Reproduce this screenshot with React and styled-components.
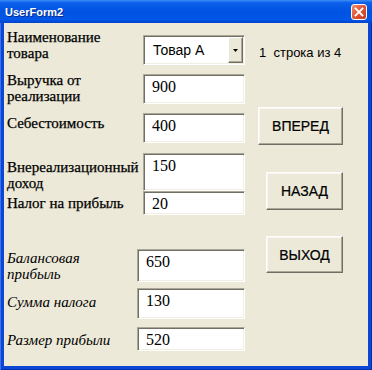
import React from 'react';
import styled, { createGlobalStyle, css } from 'styled-components';

const GlobalStyle = createGlobalStyle`
	html, body {
		margin: 0;
		padding: 0;
		background: #ffffff;
	}
	body {
		width: 372px;
		height: 370px;
		overflow: hidden;
	}
`;

const serif = `'Liberation Serif', 'Times New Roman', serif`;

const Window = styled.div`
	width: 372px;
	height: 370px;
	display: flex;
	flex-direction: column;
	box-sizing: border-box;
	background: #0a45d8;
`;

const TitleBar = styled.div`
	height: 23px;
	flex: 0 0 auto;
	display: flex;
	align-items: center;
	justify-content: space-between;
	padding: 0 5px 0 5px;
	background: linear-gradient(to bottom, #3d8ef7 0%, #0b5fea 12%, #0053e1 50%, #0257e9 85%, #0042c9 100%);
`;

const Title = styled.span`
	font-family: 'Liberation Sans', Arial, sans-serif;
	font-weight: bold;
	font-size: 11px;
	color: #ffffff;
	text-shadow: 1px 1px 0 #0a2a8a;
	padding-top: 1px;
`;

const CloseButton = styled.div`
	width: 16px;
	height: 16px;
	box-sizing: border-box;
	border: 1px solid #ffffff;
	border-radius: 3px;
	background: linear-gradient(135deg, #f0906f 0%, #e0583a 45%, #c73c1e 100%);
	display: flex;
	align-items: center;
	justify-content: center;
`;

const Frame = styled.div`
	flex: 1 1 auto;
	display: flex;
	padding: 0 4px 4px 4px;
	background: #0b46d6;
	box-shadow: inset 1px 0 0 #3a74e6, inset -1px 0 0 #0030b0, inset 0 -1px 0 #0030b0;
`;

const Body = styled.div`
	flex: 1 1 auto;
	display: flex;
	background: #ece9d8;
`;

const LeftColumn = styled.div`
	width: 241px;
	box-sizing: border-box;
	padding-left: 3px;
	display: flex;
	flex-direction: column;
`;

const RightColumn = styled.div`
	flex: 1 1 auto;
	display: flex;
	flex-direction: column;
	align-items: flex-end;
	padding-right: 25px;
`;

const Row = styled.div`
	display: grid;
	grid-template-columns: ${(p) => p.$label}px ${(p) => p.$field}px;
	height: ${(p) => p.$h}px;
	margin-top: ${(p) => p.$mt}px;
`;

const Label = styled.div`
	font-family: ${serif};
	font-size: 15px;
	line-height: 16px;
	color: #000000;
	-webkit-text-stroke: 0.25px #000000;
	white-space: pre;
	margin-top: ${(p) => p.$dy}px;
	align-self: start;
	${(p) =>
		p.$italic &&
		css`
			font-style: italic;
			-webkit-text-stroke: 0;
		`};
`;

const sunken = css`
	box-sizing: border-box;
	background: #ffffff;
	border-style: solid;
	border-width: 1px;
	border-color: #aca899 #ffffff #ffffff #aca899;
	box-shadow: inset 1px 1px 0 #716f64, inset -1px -1px 0 #f1efe2;
`;

const Field = styled.div`
	${sunken};
	font-family: ${serif};
	font-size: 16px;
	line-height: 18px;
	color: #000000;
	padding: 3px 0 0 8px;
`;

const Combo = styled.div`
	${sunken};
	display: flex;
	justify-content: space-between;
	padding: 1px 1px 1px 0;
`;

const ComboText = styled.span`
	font-family: 'Liberation Sans', Arial, sans-serif;
	font-size: 14px;
	line-height: 16px;
	color: #000000;
	padding: 5px 0 0 9px;
`;

const DropButton = styled.div`
	width: 15px;
	box-sizing: border-box;
	background: #ece9d8;
	border-style: solid;
	border-width: 1px;
	border-color: #ffffff #716f64 #716f64 #ffffff;
	box-shadow: inset -1px -1px 0 #aca899;
	display: flex;
	align-items: center;
	justify-content: center;
`;

const Counter = styled.div`
	align-self: flex-start;
	margin: 22px 0 0 14px;
	font-family: 'Liberation Sans', Arial, sans-serif;
	font-size: 13px;
	line-height: 15px;
	color: #000000;
	white-space: pre;
`;

const Button = styled.div`
	width: ${(p) => p.$w}px;
	height: ${(p) => p.$h}px;
	margin-top: ${(p) => p.$mt}px;
	box-sizing: border-box;
	display: flex;
	align-items: center;
	justify-content: center;
	background: #ece9d8;
	border-style: solid;
	border-width: 1px;
	border-color: #ffffff #716f64 #716f64 #ffffff;
	box-shadow: inset -1px -1px 0 #aca899, inset 1px 1px 0 #f8f7f0;
	font-family: 'Liberation Sans', Arial, sans-serif;
	font-size: 14px;
	color: #000000;
	-webkit-text-stroke: 0.2px #000000;
`;

const topRows = [
	{ label: 'Выручка от\nреализации', value: '900', mt: 9, h: 30, dy: -2 },
	{ label: 'Себестоимость', value: '400', mt: 9, h: 30, dy: 2 },
	{ label: 'Внереализационный\nдоход', value: '150', mt: 10, h: 30, dy: 6 },
	{ label: 'Налог на прибыль', value: '20', mt: 8, h: 24, dy: 4 },
];

const bottomRows = [
	{ label: 'Балансовая\nприбыль', value: '650', mt: 34, h: 30, dy: 1 },
	{ label: 'Сумма налога', value: '130', mt: 9, h: 31, dy: 6 },
	{ label: 'Размер прибыли', value: '520', mt: 8, h: 24, dy: 5 },
];

export default function App() {
	return (
		<Window>
			<GlobalStyle />
			<TitleBar>
				<Title>UserForm2</Title>
				<CloseButton>
					<svg width="10" height="10" viewBox="0 0 10 10">
						<path d="M1.5 1.5 L8.5 8.5 M8.5 1.5 L1.5 8.5" stroke="#ffffff" strokeWidth="1.8" strokeLinecap="square" />
					</svg>
				</CloseButton>
			</TitleBar>
			<Frame>
				<Body>
					<LeftColumn>
						<Row $label={136} $field={102} $h={30} $mt={12}>
							<Label $dy={-6}>{'Наименование\nтовара'}</Label>
							<Combo>
								<ComboText>Товар А</ComboText>
								<DropButton>
									<svg width="5" height="3" viewBox="0 0 5 3">
										<path d="M0 0 H5 L2.5 3 Z" fill="#000000" />
									</svg>
								</DropButton>
							</Combo>
						</Row>
						{topRows.map((r) => (
							<Row key={r.label} $label={136} $field={102} $h={r.h} $mt={r.mt}>
								<Label $dy={r.dy}>{r.label}</Label>
								<Field>{r.value}</Field>
							</Row>
						))}
						{bottomRows.map((r) => (
							<Row key={r.label} $label={130} $field={108} $h={r.h} $mt={r.mt}>
								<Label $dy={r.dy} $italic>
									{r.label}
								</Label>
								<Field>{r.value}</Field>
							</Row>
						))}
					</LeftColumn>
					<RightColumn>
						<Counter>1  строка из 4</Counter>
						<Button $w={85} $h={38} $mt={47}>
							ВПЕРЕД
						</Button>
						<Button $w={77} $h={38} $mt={27}>
							НАЗАД
						</Button>
						<Button $w={77} $h={37} $mt={26}>
							ВЫХОД
						</Button>
					</RightColumn>
				</Body>
			</Frame>
		</Window>
	);
}
